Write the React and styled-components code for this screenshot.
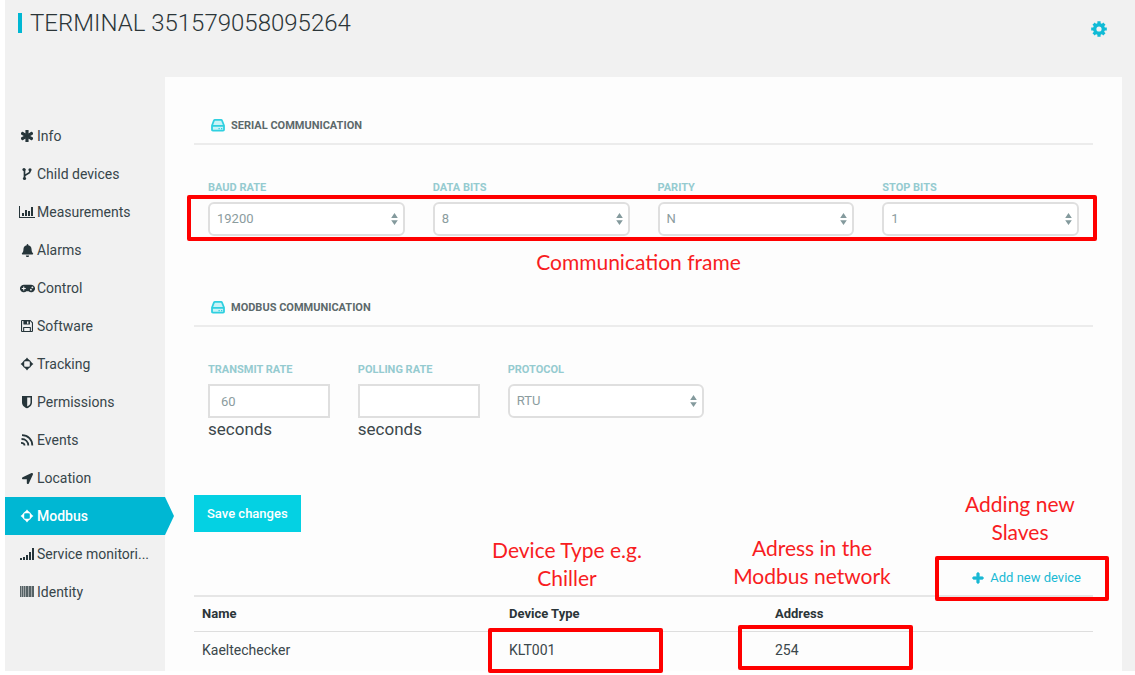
import React from "react";
import styled, { createGlobalStyle, css } from "styled-components";
import { FaAsterisk, FaBell, FaGamepad, FaLocationArrow, FaPlus } from "react-icons/fa";

const GlobalStyle = createGlobalStyle`
  *, *::before, *::after { box-sizing: border-box; }
  body {
    margin: 0;
    background: #ffffff;
    color: #3b474b;
    font-family: Roboto, "Liberation Sans", sans-serif;
    font-size: 13px;
    line-height: 20px;
  }
  button, input, select { font: inherit; color: inherit; }
`;

const Shell = styled.div`
  min-height: 100vh;
  padding-left: 5px;
`;

const Page = styled.div`
  background: #f1f1f1;
`;

const Header = styled.header`
  display: flex;
  justify-content: space-between;
  align-items: flex-start;
  height: 77px;
  padding: 7px 28px 0 13px;
`;

const Title = styled.h1`
  display: flex;
  align-items: center;
  gap: 8px;
  margin: 0;
  font-size: 24px;
  font-weight: 300;
  line-height: 32px;
  color: #2b3538;

  &::before {
    content: "";
    width: 4px;
    height: 20px;
    background: #00b7d3;
  }
`;

const IconButton = styled.button`
  display: flex;
  margin-top: 14px;
  padding: 0;
  border: 0;
  background: none;
  color: #10bbd6;
  cursor: pointer;
`;

const Body = styled.div`
  display: flex;
  align-items: stretch;
`;

const Sidebar = styled.nav`
  flex: 0 0 160px;
  padding-top: 40px;
`;

const NavLink = styled.a`
  position: relative;
  display: flex;
  align-items: center;
  gap: 2px;
  height: 38px;
  padding-left: 14px;
  font-size: 14px;
  text-decoration: none;
  white-space: nowrap;
  color: #37454a;

  ${(p) =>
    p.$active &&
    css`
      background: #00b7d3;
      color: #ffffff;
      font-weight: 500;

      &::after {
        content: "";
        position: absolute;
        top: 0;
        left: 100%;
        width: 9px;
        height: 100%;
        background: inherit;
        clip-path: polygon(0 0, 100% 50%, 0 100%);
      }
    `}
`;

const NavIcon = styled.span`
  display: flex;
  justify-content: center;
  width: 16px;
  color: ${(p) => (p.$active ? "#ffffff" : "#26353a")};
`;

const Panel = styled.main`
  flex: 1;
  min-width: 0;
  margin-right: 13px;
  padding: 39px 29px 3px;
  background: #fdfdfd;
`;

const SectionTitle = styled.h2`
  display: flex;
  align-items: center;
  gap: 6px;
  margin: 0 0 33px;
  padding: 0 17px 7px;
  border-bottom: 2px solid #ececec;
  font-size: 11px;
  font-weight: 700;
  line-height: 20px;
  text-transform: uppercase;
  color: #5c696b;

  svg { color: #2fd0e0; }
`;

const FieldRow = styled.div`
  position: relative;
  display: flex;
  margin-bottom: ${(p) => p.$gap}px;
`;

const Field = styled.div`
  flex: 0 0 ${(p) => p.$share};
  display: flex;
  flex-direction: column;
  padding: 0 14px;
`;

const Label = styled.label`
  margin-bottom: 4px;
  font-size: 11px;
  font-weight: 700;
  text-transform: uppercase;
  color: #95cbd0;
`;

const SelectWrap = styled.div`
  position: relative;
  color: #849a9d;

  svg {
    position: absolute;
    top: 11px;
    right: 7px;
    pointer-events: none;
  }
`;

const control = css`
  display: block;
  width: 100%;
  height: 34px;
  border: 2px solid #dfdfdf;
  background: #ffffff;
  color: #8b9c9e;
  font-size: 13px;
`;

const Select = styled.select`
  ${control}
  appearance: none;
  padding: 0 20px 0 7px;
  border-radius: 6px;
`;

const TextInput = styled.input`
  ${control}
  padding: 0 11px;
  border-radius: 0;
`;

const Unit = styled.span`
  font-size: 17px;
  line-height: 22px;
`;

const SaveButton = styled.button`
  display: block;
  height: 37px;
  padding: 0 13px;
  border: 0;
  background: #04d1e3;
  color: #ffffff;
  font-size: 13px;
  font-weight: 500;
  cursor: pointer;
`;

const TableActions = styled.div`
  position: relative;
  display: flex;
  justify-content: flex-end;
  padding: 34px 12px 5px 0;
`;

const AddLink = styled.a`
  display: flex;
  align-items: center;
  gap: 6px;
  height: 24px;
  font-size: 13px;
  text-decoration: none;
  color: #1ab9d4;

  svg {
    stroke: currentColor;
    stroke-width: 40;
  }
`;

const DeviceTable = styled.table`
  width: 100%;
  table-layout: fixed;
  border-collapse: separate;
  border-spacing: 0;
  border-top: 2px solid #e6e6e6;
  text-align: left;
`;

const HeadCell = styled.th`
  position: relative;
  width: ${(p) => p.$width || "auto"};
  padding: 7px 8px;
  border-bottom: 1px solid #dedede;
  font-weight: 700;
  color: #2b3538;
`;

const Cell = styled.td`
  position: relative;
  padding: 8px;
  font-size: 14px;
`;

/* Red annotations lie over the form and never catch the pointer. */
const Frame = styled.span`
  position: absolute;
  z-index: 2;
  inset: ${(p) => p.$inset};
  width: ${(p) => p.$width || "auto"};
  border: 4px solid #ff0000;
  border-radius: 2px;
  pointer-events: none;
`;

const Note = styled.span`
  position: absolute;
  z-index: 2;
  inset: ${(p) => p.$inset};
  width: ${(p) => p.$width || "auto"};
  font-family: Lato, "Open Sans", sans-serif;
  font-size: 21px;
  font-weight: 400;
  line-height: 28px;
  text-align: center;
  white-space: pre-line;
  color: #f81c22;
  pointer-events: none;
`;

const Glyph = ({ w = 14, h = 14, box = "0 0 14 14", children }) => (
  <svg width={w} height={h} viewBox={box} fill="currentColor" aria-hidden="true">
    {children}
  </svg>
);

const ForkIcon = () => (
  <Glyph>
    <g fill="none" stroke="currentColor" strokeWidth="1.7">
      <path d="M4.500 2v10M10 3v1.500c0 2.500-5.500 2.500-5.500 5" />
    </g>
    <circle cx="4" cy="2.500" r="1.600" />
    <circle cx="4.500" cy="11.500" r="1.600" />
    <circle cx="10" cy="2.800" r="1.600" />
  </Glyph>
);

const ChartIcon = () => (
  <Glyph w={16} box="0 0 16 14">
    <path d="M0 1h1v11h15v1H0zM3 8h2v3H3zM6 5h2v6H6zM9 6h2v5H9zM12 2h2v9h-2z" />
  </Glyph>
);

const FloppyIcon = () => (
  <Glyph>
    <path
      fillRule="evenodd"
      d="M1 2a1 1 0 0 1 1-1h8.500L13 3.500V12a1 1 0 0 1-1 1H2a1 1 0 0 1-1-1zm1.100.100v9.800h1V8.500a.6.6 0 0 1 .6-.6h6.600a.6.6 0 0 1 .6.6v3.400h1V4L10 2.100V5a.6.6 0 0 1-.6.6H4a.6.6 0 0 1-.6-.6V2.100zm4.900.400v2.200h1.400V2.500zM4.200 9v2.900h5.600V9z"
    />
  </Glyph>
);

const CrosshairIcon = () => (
  <Glyph>
    <circle cx="7" cy="7" r="4" fill="none" stroke="currentColor" strokeWidth="1.400" />
    <path d="M7 .6l2 2.600v1H5v-1zM7 13.400l2-2.600v-1H5v1zM.6 7l2.600-2h1v4h-1zM13.400 7l-2.600-2h-1v4h1z" />
  </Glyph>
);

const ShieldIcon = () => (
  <Glyph>
    <path
      fillRule="evenodd"
      d="M2 1h10v6.500c0 3-2.600 4.800-5 5.800-2.400-1-5-2.800-5-5.800zm5.200 1.600v8.900c1.700-.9 3.300-2.100 3.300-4.100V2.600z"
    />
  </Glyph>
);

const FeedIcon = () => (
  <Glyph>
    <g fill="none" stroke="currentColor" strokeWidth="1.800">
      <path d="M2 2.200c6 0 10.300 4.200 10.300 10.300" />
      <path d="M1.500 6c4 0 6.800 2.700 6.800 6.500" />
      <path d="M1 9.800c2.200 0 3.500 1 3.500 2.700" />
    </g>
  </Glyph>
);

const SignalIcon = () => (
  <Glyph w={16} box="0 0 16 14">
    <path d="M1 11h2v2H1zM4 10h2v3H4zM7 8h2v5H7zM10 5h2v8h-2zM13 1h2v12h-2z" />
  </Glyph>
);

const BarcodeIcon = () => (
  <Glyph w={16} box="0 0 16 14">
    <path d="M1 1h1v11H1zM3 1h1v11H3zM5 1h1v11H5zM7 1h2v11H7zM10 1h2v11h-2zM13 1h2v11h-2z" opacity=".6" />
    <path d="M1 1h14v11H1z" opacity=".4" />
  </Glyph>
);

const DriveIcon = () => (
  <Glyph h={16} box="0 0 14 16">
    <path
      fill="#c9f3f7"
      stroke="currentColor"
      strokeWidth="1.800"
      strokeLinejoin="round"
      d="M1 7.500L2.900 2.700Q3.200 1.900 4 1.900h6q.8 0 1.100.8L13 7.500v4.200q0 .9-.9.9H1.900q-.9 0-.9-.9z"
    />
    <path d="M1 7h12v1.700H1zM7.500 10h1.300v1.200H7.500zM10 10h1.300v1.200H10z" />
  </Glyph>
);

const GearIcon = () => (
  <Glyph w={16} h={16} box="0 0 16 16">
    <g stroke="currentColor" strokeWidth="3.200">
      <path d="M8 .2v3.300M8 12.500v3.300M.2 8h3.300M12.500 8h3.300M2.600 2.600l2.200 2.200M11.200 11.200l2.200 2.200M2.600 13.400l2.200-2.200M11.200 4.800l2.200-2.200" />
    </g>
    <circle cx="8" cy="8" r="4.300" fill="none" stroke="currentColor" strokeWidth="3.400" />
  </Glyph>
);

const SortArrows = () => (
  <Glyph w={7} h={12} box="0 0 7 12">
    <path d="M.2 5L3.500 0l3.300 5zM.2 7.300h6.600L3.500 12z" />
  </Glyph>
);

const NAV = [
  ["Info", <FaAsterisk size={12} stroke="currentColor" strokeWidth={50} />],
  ["Child devices", <ForkIcon />],
  ["Measurements", <ChartIcon />],
  ["Alarms", <FaBell size={13} />],
  ["Control", <FaGamepad size={15} />],
  ["Software", <FloppyIcon />],
  ["Tracking", <CrosshairIcon />],
  ["Permissions", <ShieldIcon />],
  ["Events", <FeedIcon />],
  ["Location", <FaLocationArrow size={11} />],
  ["Modbus", <CrosshairIcon />],
  ["Service monitori...", <SignalIcon />],
  ["Identity", <BarcodeIcon />],
];

const SERIAL_FIELDS = [
  { id: "baud", label: "Baud rate", value: "19200" },
  { id: "data-bits", label: "Data bits", value: "8" },
  { id: "parity", label: "Parity", value: "N" },
  { id: "stop-bits", label: "Stop bits", value: "1" },
];

function SelectField({ id, label, value }) {
  return (
    <Field $share="25%">
      <Label htmlFor={id}>{label}</Label>
      <SelectWrap>
        <Select id={id} defaultValue={value}>
          <option>{value}</option>
        </Select>
        <SortArrows />
      </SelectWrap>
    </Field>
  );
}

function RateField({ id, label, value }) {
  return (
    <Field $share="16.667%">
      <Label htmlFor={id}>{label}</Label>
      <TextInput id={id} type="text" defaultValue={value} />
      <Unit>seconds</Unit>
    </Field>
  );
}

export default function App() {
  return (
    <Shell>
      <GlobalStyle />
      <Page>
        <Header>
          <Title>TERMINAL 351579058095264</Title>
          <IconButton type="button" aria-label="Settings">
            <GearIcon />
          </IconButton>
        </Header>
        <Body>
          <Sidebar>
            {NAV.map(([name, icon]) => {
              const active = name === "Modbus";
              return (
                <NavLink key={name} href="#" $active={active} aria-current={active ? "page" : undefined}>
                  <NavIcon $active={active}>{icon}</NavIcon>
                  {name}
                </NavLink>
              );
            })}
          </Sidebar>
          <Panel>
            <SectionTitle>
              <DriveIcon />
              Serial communication
            </SectionTitle>
            <FieldRow $gap={62}>
              {SERIAL_FIELDS.map((field) => (
                <SelectField key={field.id} {...field} />
              ))}
              <Frame $inset="17px -4px -5px -7px" />
              <Note $inset="70px 10px auto 0">Communication frame</Note>
            </FieldRow>

            <SectionTitle>
              <DriveIcon />
              Modbus communication
            </SectionTitle>
            <FieldRow $gap={55}>
              <RateField id="transmit" label="Transmit rate" value="60" />
              <RateField id="polling" label="Polling rate" value="" />
              <SelectField id="protocol" label="Protocol" value="RTU" />
            </FieldRow>

            <SaveButton type="button">Save changes</SaveButton>

            <TableActions>
              <AddLink href="#">
                <FaPlus size={12} />
                Add new device
              </AddLink>
              <Frame $inset="24px -16px -6px auto" $width="174px" />
              <Note $inset="-42px -14px auto auto" $width="174px">{"Adding new\nSlaves"}</Note>
            </TableActions>

            <DeviceTable>
              <thead>
                <tr>
                  <HeadCell $width="307px">Name</HeadCell>
                  <HeadCell $width="266px">
                    Device Type
                    <Note $inset="-61px auto auto -22px" $width="176px">{"Device Type e.g.\nChiller"}</Note>
                  </HeadCell>
                  <HeadCell>
                    Address
                    <Note $inset="-63px auto auto -43px" $width="176px">{"Adress in the\nModbus network"}</Note>
                  </HeadCell>
                </tr>
              </thead>
              <tbody>
                <tr>
                  <Cell>Kaeltechecker</Cell>
                  <Cell>
                    KLT001
                    <Frame $inset="-4px auto -5px -13px" $width="175px" />
                  </Cell>
                  <Cell>
                    254
                    <Frame $inset="-7px auto -2px -29px" $width="175px" />
                  </Cell>
                </tr>
              </tbody>
            </DeviceTable>
          </Panel>
        </Body>
      </Page>
    </Shell>
  );
}
